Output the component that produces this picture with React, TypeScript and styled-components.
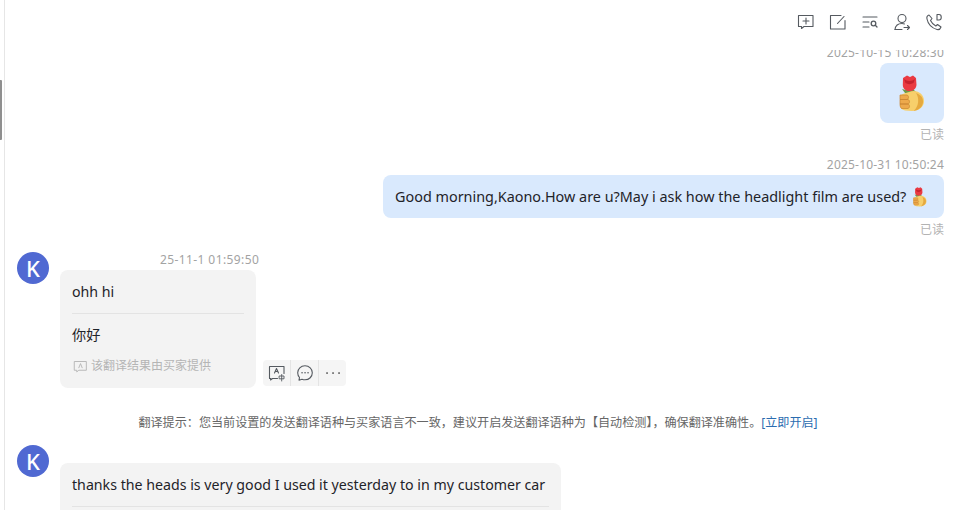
import React from "react"
import styled, { createGlobalStyle } from "styled-components"

const GlobalStyle = createGlobalStyle`
  html, body {
    margin: 0;
    padding: 0;
    background: #fff;
  }
  body {
    font-family: "Noto Sans", "Noto Sans CJK SC", sans-serif;
    color: #1f2329;
  }
`

const RoseHand: React.FC<{ height: number }> = ({ height }) => (
  <svg height={height} width={(height * 26) / 37} viewBox="0 0 26 37" aria-hidden="true">
    <path d="M7 15 L3 14 L6 18 L12 18 L17 17 L14 14 Z" fill="#6f9a4a" />
    <path d="M4 3 L8 0.500 L11 2 L14 0.500 L17 3 L17.500 10 C17 14 14 16 10.500 16 C7 16 4 14 3.800 10 Z" fill="#ea3a42" />
    <path d="M5 4 C8 6.500 13 6.500 16 4 L14.500 8 C12 9.500 8.500 9.500 6.500 8 Z" fill="#c7222e" />
    <path d="M10 17 C18 14 25 19 25 26 C25 32 20 36 13 36 L6 35.500 C3 35 1 33 1 30 L1 21 C3 18.500 7 18 10 17 Z" fill="#f7cf6b" />
    <path d="M17 18 C22 20 24.500 23 24 27.500 C23.500 32 20 35 14.500 36 C20 31.500 20.500 23 17 18 Z" fill="#e5a93f" />
    <path d="M1 20 H8 C10 20.500 10 24 8 24.500 H1 Z M1 24.500 H9 C11 25 11 28.500 9 29 H1 Z M1 29 H9 C11 29.500 11 33 9 33.500 H2.500 C1.500 32.500 1 31 1 29 Z" fill="#eda94c" stroke="#c98531" strokeWidth="0.700" />
  </svg>
)

const Icon: React.FC<{ children: React.ReactNode; size?: number }> = ({ children, size = 18 }) => (
  <svg
    width={size}
    height={size}
    viewBox="0 0 18 18"
    fill="none"
    stroke="currentColor"
    strokeWidth="1.1"
    strokeLinecap="round"
    strokeLinejoin="round"
    aria-hidden="true"
  >
    {children}
  </svg>
)

const App: React.FC = () => (
  <Page>
    <GlobalStyle />
    <Rail>
      <Thumb />
    </Rail>
    <Main>
      <Toolbar>
        <ToolButton>
          <Icon>
            <path d="M1.500 2.500 H16 V13.500 H7 L4.500 15.500 L4.500 13.500 H1.500 Z" />
            <path d="M6 8 H12 M9 5 V11" />
          </Icon>
        </ToolButton>
        <ToolButton>
          <Icon>
            <path d="M12 2.500 H1.500 V16 H16 V7.500" />
            <path d="M8.500 10.500 L15 3.500" />
          </Icon>
        </ToolButton>
        <ToolButton>
          <Icon>
            <path d="M2 4 H16 M2 9 H8 M2 14 H8" />
            <circle cx="12.500" cy="10.500" r="2.300" strokeWidth="1.300" />
            <path d="M14.300 12.300 L16 14" strokeWidth="1.300" />
          </Icon>
        </ToolButton>
        <ToolButton>
          <Icon>
            <circle cx="9" cy="5.500" r="4" />
            <path d="M2 16.500 C2.500 12.500 5 10.500 9 10.500 C10 10.500 10.800 10.600 11.500 10.900" />
            <path d="M2 16.500 H9 M11 14.500 H16.500 M14.500 12.500 L16.500 14.500 L14.500 16.500" />
          </Icon>
        </ToolButton>
        <ToolButton>
          <Icon>
            <path d="M4 2 C2.500 2.500 1.500 4 2 6 C3 11 7 15 12 16.500 C14 17 15.500 15.500 16 14 L12.500 11.500 L10.800 13 C8.500 11.800 6.500 9.500 5.500 7.500 L7 5.500 Z" />
            <path d="M12 1.500 H14 C17 1.500 17 7 14 7 H12 Z" />
          </Icon>
        </ToolButton>
      </Toolbar>
      <Feed>
        <TimeRight $top={-5}>2025-10-15 10:28:30</TimeRight>
        <OutRow>
          <OutBubble $sticker>
            <RoseHand height={37} />
          </OutBubble>
        </OutRow>
        <ReadMark>已读</ReadMark>

        <TimeRight $top={14}>2025-10-31 10:50:24</TimeRight>
        <OutRow>
          <OutBubble>
            Good morning,Kaono.How are u?May i ask how the headlight film are used?
            <RoseHand height={20} />
          </OutBubble>
        </OutRow>
        <ReadMark>已读</ReadMark>

        <InRow $top={14}>
          <Avatar>K</Avatar>
          <InBody>
            <InTime>25-11-1 01:59:50</InTime>
            <BubbleRow>
              <InBubble>
                <MessageText>ohh hi</MessageText>
                <Divider />
                <MessageText>你好</MessageText>
                <Note>
                  <Icon size={15}>
                    <path d="M2 3 H16 V13.500 H7 L4.500 15.500 L4.500 13.500 H2 Z" />
                    <path d="M7 10.500 L9 5.500 L11 10.500" />
                  </Icon>
                  该翻译结果由买家提供
                </Note>
              </InBubble>
              <Actions>
                <ActionButton>
                  <Icon>
                    <path d="M9.500 14.500 H4.500 L2.500 16 L2.800 14.500 H1.500 V2.500 H16 V9.500" />
                    <path d="M6.500 9 L8.500 4.500 L10.500 9 M7.300 7.500 H9.700" />
                    <path d="M11.500 12 H16 V14.800 H11.500 Z M13.700 10.500 V17" strokeWidth="0.900" />
                  </Icon>
                </ActionButton>
                <ActionButton>
                  <Icon>
                    <path d="M9 1.800 C13.200 1.800 16.300 4.900 16.300 8.800 C16.300 12.700 13.200 15.800 9 15.800 C7.900 15.800 6.900 15.600 6 15.200 L3 16.200 L3.500 13.500 C2.300 12.200 1.700 10.600 1.700 8.800 C1.700 4.900 4.800 1.800 9 1.800 Z" />
                    <path d="M6 8.800 H6.100 M9 8.800 H9.100 M12 8.800 H12.100" strokeWidth="1.500" />
                  </Icon>
                </ActionButton>
                <ActionButton $dark>
                  <Icon>
                    <path d="M3 9 H3.100 M9 9 H9.100 M15 9 H15.100" strokeWidth="1.700" />
                  </Icon>
                </ActionButton>
              </Actions>
            </BubbleRow>
          </InBody>
        </InRow>

        <Hint>
          翻译提示：您当前设置的发送翻译语种与买家语言不一致，建议开启发送翻译语种为【自动检测】，确保翻译准确性。
          <HintLink>[立即开启]</HintLink>
        </Hint>

        <InRow $top={13}>
          <Avatar>K</Avatar>
          <InBody>
            <Spacer />
            <InBubble $wide>
              <MessageText>thanks the heads is very good I used it yesterday to in my customer car</MessageText>
              <Divider />
            </InBubble>
          </InBody>
        </InRow>
      </Feed>
    </Main>
  </Page>
)

const Page = styled.div`
  display: flex;
  width: 954px;
  height: 510px;
  overflow: hidden;
  background: #fff;
`

const Rail = styled.div`
  position: relative;
  flex: none;
  width: 4px;
  border-right: 1px solid #e6e6e6;
`

const Thumb = styled.div`
  position: absolute;
  left: 0;
  top: 80px;
  width: 2px;
  height: 60px;
  background: #8f8f8f;
  border-radius: 0 1px 1px 0;
`

const Main = styled.div`
  flex: 1;
  min-width: 0;
  display: flex;
  flex-direction: column;
`

const Toolbar = styled.div`
  flex: none;
  height: 50px;
  box-sizing: border-box;
  display: flex;
  justify-content: flex-end;
  gap: 14px;
  padding: 13px 11px 0 0;
  color: #555a60;
`

const ToolButton = styled.span`
  display: block;
  width: 18px;
  height: 18px;
`

const Feed = styled.div`
  flex: 1;
  min-height: 0;
  overflow: hidden;
  padding: 0 10px 0 12px;
`

const TimeRight = styled.div<{ $top: number }>`
  margin-top: ${(p) => p.$top}px;
  height: 16px;
  font-size: 12px;
  line-height: 16px;
  text-align: right;
  color: #a3a3a3;
  letter-spacing: 0.2px;
`

const OutRow = styled.div`
  display: flex;
  justify-content: flex-end;
  margin-top: 2px;
`

const OutBubble = styled.div<{ $sticker?: boolean }>`
  display: flex;
  align-items: center;
  justify-content: ${(p) => (p.$sticker ? "center" : "space-between")};
  box-sizing: border-box;
  height: ${(p) => (p.$sticker ? "60px" : "43px")};
  width: ${(p) => (p.$sticker ? "64px" : "561px")};
  padding: ${(p) => (p.$sticker ? "0" : "0 17px 0 12px")};
  border-radius: 8px;
  background: #d9e9fd;
  font-size: 14.4px;
  white-space: nowrap;
  color: #1f2329;
`

const ReadMark = styled.div`
  margin-top: 4px;
  height: 16px;
  font-size: 12px;
  line-height: 16px;
  text-align: right;
  color: #b3b3b3;
`

const InRow = styled.div<{ $top: number }>`
  display: flex;
  gap: 11px;
  margin-top: ${(p) => p.$top}px;
`

const Avatar = styled.div`
  flex: none;
  width: 32px;
  height: 32px;
  border-radius: 50%;
  background: #5069d2;
  color: #fff;
  font-size: 22px;
  font-weight: 500;
  line-height: 32px;
  text-align: center;
`

const InBody = styled.div`
  min-width: 0;
  display: flex;
  flex-direction: column;
`

const InTime = styled.div`
  height: 16px;
  padding-left: 100px;
  font-size: 12px;
  line-height: 16px;
  color: #a3a3a3;
  letter-spacing: 0.4px;
`

const Spacer = styled.div`
  height: 18px;
`

const BubbleRow = styled.div`
  display: flex;
  align-items: flex-end;
  gap: 7px;
  margin-top: 2px;
`

const InBubble = styled.div<{ $wide?: boolean }>`
  box-sizing: border-box;
  min-width: ${(p) => (p.$wide ? "501px" : "196px")};
  padding: 12px 12px 13px;
  border-radius: 8px;
  background: #f3f3f3;
`

const MessageText = styled.div`
  font-size: 14.2px;
  line-height: 20px;
  color: #1f2329;
  white-space: nowrap;
`

const Divider = styled.div`
  height: 1px;
  margin: 11px 0;
  background: #e3e3e3;
`

const Note = styled.div`
  display: flex;
  align-items: center;
  gap: 3px;
  margin: 12px 0 0 1px;
  font-size: 12px;
  line-height: 18px;
  color: #b5b5b5;
`

const Actions = styled.div`
  display: flex;
  width: 83px;
  height: 26px;
  margin-bottom: 2px;
  border-radius: 4px;
  background: #f5f5f5;
  overflow: hidden;
`

const ActionButton = styled.span<{ $dark?: boolean }>`
  flex: 1;
  display: flex;
  align-items: center;
  justify-content: center;
  color: ${(p) => (p.$dark ? "#3a3a3a" : "#555a60")};
  & + & {
    border-left: 1px solid #e4e4e4;
  }
`

const Hint = styled.div`
  margin-top: 26px;
  padding-right: 5px;
  font-size: 12.1px;
  line-height: 18px;
  text-align: center;
  color: #666;
  white-space: nowrap;
`

const HintLink = styled.span`
  color: #2b6cb0;
`

export default App
